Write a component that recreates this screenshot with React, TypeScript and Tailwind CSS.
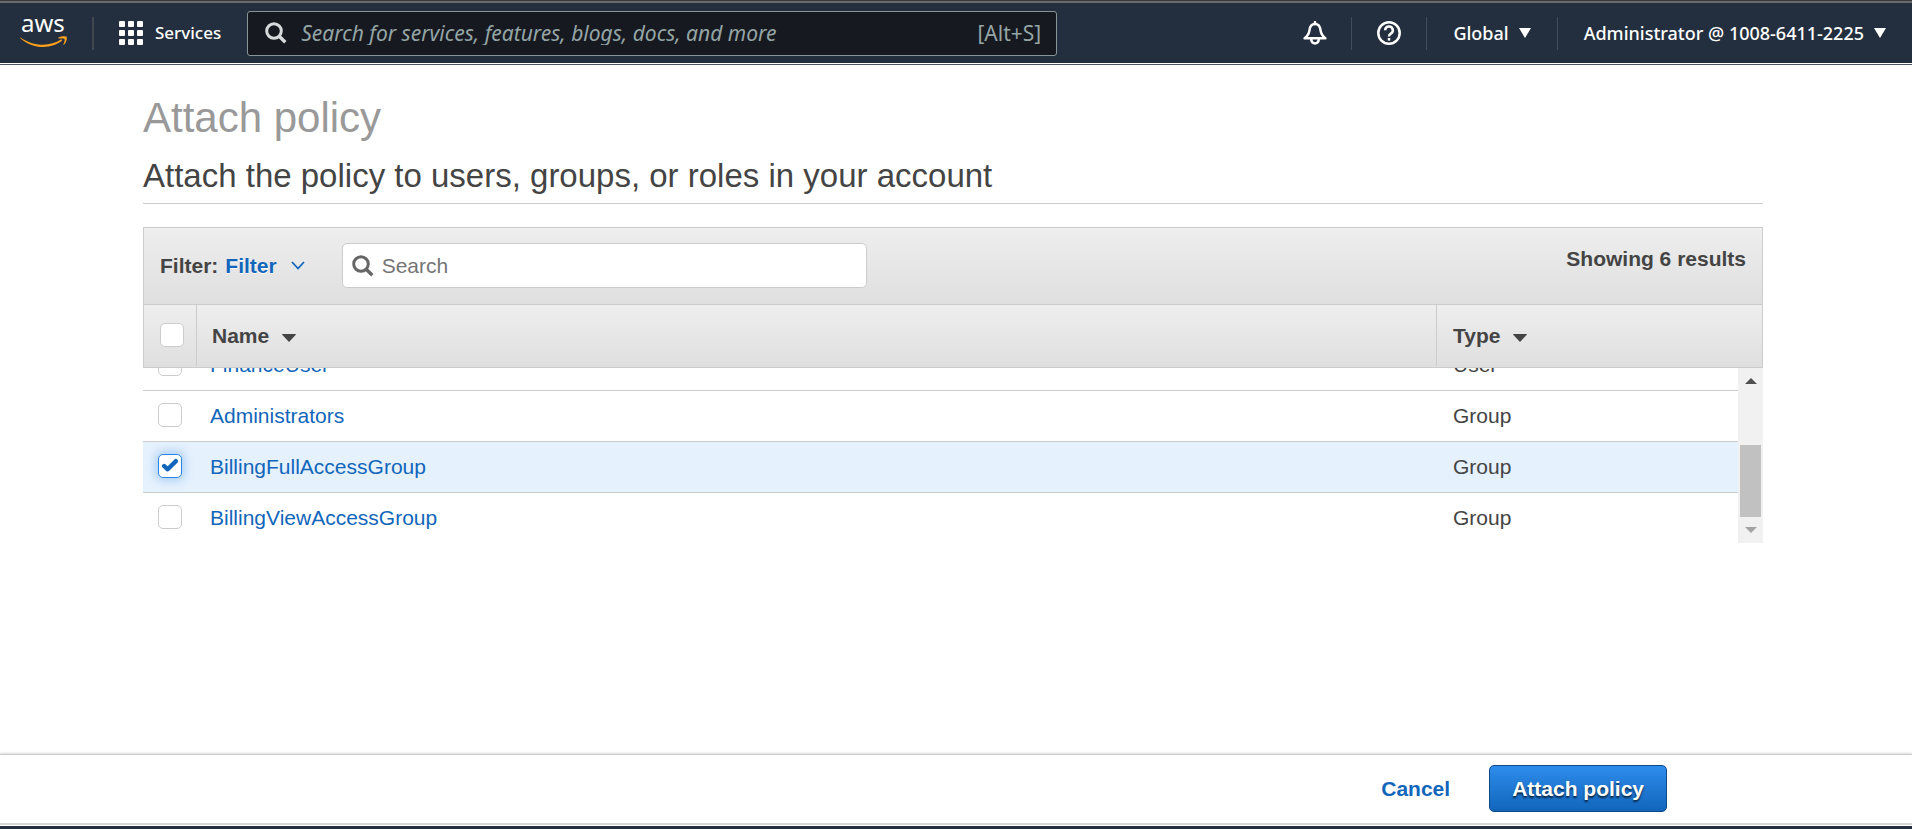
import { useState } from "react";

type Row = { name: string; type: string };

const ROWS: Row[] = [
  { name: "FinanceUser", type: "User" },
  { name: "Administrators", type: "Group" },
  { name: "BillingFullAccessGroup", type: "Group" },
  { name: "BillingViewAccessGroup", type: "Group" },
];

function AwsLogo() {
  return (
    <svg width="48" height="56" viewBox="0 -12 48 56" role="img" aria-label="aws">
      <text x="1" y="15" fill="#fff" fontSize="24" fontFamily="'Noto Sans', sans-serif">
        aws
      </text>
      <path d="M0.5 20.500C7 25.200 15 27.800 23 27.800c6.500 0 13-1.900 18-5.200.9-.6 1.700.5.8 1.200C37 27.700 30 30 23.500 30 14.500 30 6.500 26.600.4 21.200c-.5-.5-.3-1 .1-.7z" fill="#ff9f1c" />
      <path d="M38.500 20.600c2.400-1.600 7.600-1.500 8.200-.7.600.8-.2 5.600-2.600 7.700-.5.400-.9.200-.7-.3.600-1.500 1.700-4.600 1.100-5.400-.6-.8-3.900-.5-5.500-.3-.6.100-.9-.6-.5-1z" fill="#ff9f1c" />
    </svg>
  );
}

function GridIcon() {
  const cells = [0, 9, 18];
  return (
    <svg width="24" height="24" viewBox="0 0 24 24" fill="#fff" aria-hidden="true">
      {cells.map((y) => cells.map((x) => <rect key={`${x}-${y}`} x={x} y={y} width="6" height="6" rx="1" />))}
    </svg>
  );
}

function SearchIcon({ className }: { className: string }) {
  return (
    <svg width="22" height="22" viewBox="0 0 22 22" fill="none" stroke="currentColor" className={className} aria-hidden="true">
      <circle cx="9" cy="9" r="7.300" strokeWidth="3" />
      <path d="M14.200 14.200L20.300 20.300" strokeWidth="3.400" />
    </svg>
  );
}

function BellIcon() {
  return (
    <svg width="24" height="24" viewBox="0 0 24 24" fill="none" stroke="#fff" strokeWidth="2.500" strokeLinejoin="round" aria-hidden="true">
      <path d="M12 1v2" strokeLinecap="round" />
      <path d="M1.600 17.200h20.800c-2.600-1.700-4.400-4.200-4.900-8C17.100 5.600 15 3 12 3S6.900 5.600 6.500 9.200c-.5 3.800-2.300 6.300-4.900 8z" />
      <path d="M8.300 17.500v1.300a3.700 3.700 0 0 0 7.400 0v-1.300" />
    </svg>
  );
}

function HelpIcon() {
  return (
    <svg width="24" height="24" viewBox="0 0 24 24" fill="none" stroke="#fff" strokeWidth="2.500" aria-hidden="true">
      <circle cx="12" cy="12" r="10.700" />
      <path d="M8.200 9.300a3.800 3.800 0 1 1 5.600 3.300c-1.200.7-1.800 1.300-1.800 2.900" />
      <path d="M12 17v2.600" />
    </svg>
  );
}

function Triangle() {
  return (
    <svg width="12" height="10" viewBox="0 0 12 10" fill="#fff" aria-hidden="true">
      <path d="M0 0h12L6 10z" />
    </svg>
  );
}

function SortArrow() {
  return (
    <svg width="14" height="8" viewBox="0 0 14 8" fill="#444" className="mt-1" aria-hidden="true">
      <path d="M.5 0h13L14 .5 7 8 0 .5z" />
    </svg>
  );
}

function Checkbox({ label, checked, onChange }: { label: string; checked: boolean; onChange: () => void }) {
  return (
    <span className="relative block size-6">
      <input
        type="checkbox"
        aria-label={label}
        checked={checked}
        onChange={onChange}
        className="block size-6 appearance-none rounded-[5px] border border-[#ccc] bg-white checked:border-[#2a85e0] checked:shadow-[0_0_10px_2px_rgba(40,130,230,0.35)]"
      />
      {checked && (
        <svg width="16" height="14" viewBox="0 0 16 14" className="pointer-events-none absolute top-1 left-1" aria-hidden="true">
          <path d="M2.200 8L5.700 11.300L13.800 3.200" fill="none" stroke="#1166bb" strokeWidth="4.400" strokeLinejoin="round" strokeLinecap="round" />
        </svg>
      )}
    </span>
  );
}

export default function App() {
  const [selected, setSelected] = useState<string[]>(["BillingFullAccessGroup"]);
  const toggle = (name: string) =>
    setSelected((current) => (current.includes(name) ? current.filter((n) => n !== name) : [...current, name]));
  const allSelected = selected.length === ROWS.length;

  return (
    <div className="flex min-h-screen flex-col bg-white font-['Liberation_Sans',Arial,sans-serif] text-[21px] leading-6 text-[#444]">
      <header className="border-t border-[#3a3a3c] font-['Noto_Sans',sans-serif]">
        <div className="flex h-[62px] items-center border-t-2 border-[#6a6a6a] bg-[#232f3e]">
          <a href="#home" className="ml-5">
            <AwsLogo />
          </a>
          <div className="ml-6 h-[33px] w-0.5 bg-[#414750]" />
          <button type="button" className="ml-[25px] flex items-center gap-3 text-[17px] font-medium text-white">
            <GridIcon />
            Services
          </button>
          <label className="ml-[26px] flex h-[45px] w-[810px] items-center rounded-[3px] border border-[#879596] bg-[#16191f] px-[15px] text-[21px] text-[#95a5a6]">
            <SearchIcon className="ml-0.5 text-[#d5dbdb]" />
            <input
              type="text"
              aria-label="Search for services, features, blogs, docs, and more"
              placeholder="Search for services, features, blogs, docs, and more"
              className="ml-[14px] min-w-0 flex-1 bg-transparent outline-none placeholder:text-[#95a5a6] placeholder:italic"
            />
            <span>[Alt+S]</span>
          </label>
          <nav className="ml-auto flex items-center text-[18px] font-medium text-white">
            <button type="button" aria-label="Notifications" className="flex h-[33px] items-center px-6">
              <BellIcon />
            </button>
            <button type="button" aria-label="Help" className="flex h-[33px] items-center border-l border-[#414d5c] px-[25px]">
              <HelpIcon />
            </button>
            <button type="button" className="flex h-[33px] items-center gap-2.5 border-l border-[#414d5c] px-[26px]">
              Global
              <Triangle />
            </button>
            <button type="button" className="flex h-[33px] items-center gap-2.5 border-l border-[#414d5c] px-[26px]">
              Administrator @ 1008-6411-2225
              <Triangle />
            </button>
          </nav>
        </div>
        <div className="mt-px h-px bg-[#4b5563]" />
      </header>

      <main className="flex-1 pr-[149px] pl-[143px]">
        <h1 className="mt-[29px] text-[42px] leading-[48px] text-[#999]">Attach policy</h1>
        <h2 className="mt-[15px] border-b border-[#ccc] pb-2 text-[33px] leading-[38px] text-[#444]">
          Attach the policy to users, groups, or roles in your account
        </h2>

        <section className="mt-[23px]">
          <div className="flex h-[77px] items-start border border-b-0 border-[#ccc] bg-linear-to-b from-[#eee] to-[#dfdfdf] px-4 pt-[15px] font-bold">
            <div className="flex h-[45px] items-center">
              <span>Filter:</span>
              <button type="button" className="ml-[7px] flex items-center text-[#1166bb] [text-shadow:0_1px_0_#fff]">
                Filter
                <svg width="14" height="9" viewBox="0 0 14 9" fill="none" stroke="#1166bb" strokeWidth="1.800" className="ml-[14px]" aria-hidden="true">
                  <path d="M1 1l6 6.500L13 1" />
                </svg>
              </button>
            </div>
            <label className="ml-[37px] flex h-[45px] w-[525px] items-center gap-2 rounded-[5px] border border-[#ccc] bg-white px-[9px] font-normal">
              <SearchIcon className="text-[#666]" />
              <input type="search" aria-label="Search" placeholder="Search" className="min-w-0 flex-1 bg-transparent outline-none placeholder:text-[#757575]" />
            </label>
            <span className="mt-1 ml-auto">Showing 6 results</span>
          </div>

          <div className="relative">
            <table className="block w-full">
              <thead className="block">
                <tr className="flex h-16 items-stretch border border-[#ccc] bg-linear-to-b from-[#eee] to-[#dfdfdf] text-left">
                  <th className="flex w-[52px] items-center pb-0.5 pl-4">
                    <Checkbox
                      label="Select all"
                      checked={allSelected}
                      onChange={() => setSelected(allSelected ? [] : ROWS.map((r) => r.name))}
                    />
                  </th>
                  <th className="mb-px flex flex-1 items-center gap-[13px] border-l border-[#ccc] pl-[15px]">
                    Name
                    <SortArrow />
                  </th>
                  <th className="mb-px flex w-[326px] items-center gap-[13px] border-l border-[#ccc] pl-4">
                    Type
                    <SortArrow />
                  </th>
                </tr>
              </thead>
              <tbody className="flex h-[175px] flex-col justify-end overflow-hidden pr-[25px]">
                {ROWS.map((row) => {
                  const checked = selected.includes(row.name);
                  return (
                    <tr
                      key={row.name}
                      className={`flex h-[51px] shrink-0 items-center border-b border-[#ccc] last:h-[50px] last:border-b-0 ${checked ? "bg-[#e5f1fd]" : "bg-white"}`}
                    >
                      <td className="w-[67px] pb-0.5 pl-[15px]">
                        <Checkbox label={`Select ${row.name}`} checked={checked} onChange={() => toggle(row.name)} />
                      </td>
                      <td className="flex-1">
                        <a href="#details" className="text-[#1166bb]">
                          {row.name}
                        </a>
                      </td>
                      <td className="w-[285px]">{row.type}</td>
                    </tr>
                  );
                })}
              </tbody>
            </table>
            <div className="absolute right-0 bottom-0 flex h-[175px] w-[25px] flex-col items-center bg-[#f1f1f1]" aria-hidden="true">
              <svg width="12" height="6" viewBox="0 0 12 6" className="mt-2.5" fill="#505050">
                <path d="M6 0l6 6H0z" />
              </svg>
              <div className="mt-[61px] h-[72px] w-[21px] bg-[#c1c1c1]" />
              <svg width="12" height="6" viewBox="0 0 12 6" className="mt-2.5" fill="#a3a3a3">
                <path d="M0 0h12L6 6z" />
              </svg>
            </div>
          </div>
        </section>
      </main>

      <footer className="border-t border-[#ccc] shadow-[0_-1px_2px_rgba(0,0,0,0.15)]">
        <div className="flex h-[68px] items-start justify-end gap-[39px] pt-2.5 pr-[245px] font-bold">
          <button type="button" className="h-[47px] text-[#1166bb]">
            Cancel
          </button>
          <button
            type="button"
            className="h-[47px] rounded-[5px] border border-[#0d4a8a] bg-linear-to-b from-[#2d8cec] to-[#1166bb] px-[22px] text-white [text-shadow:0_2px_2px_rgba(0,0,0,0.7)]"
          >
            Attach policy
          </button>
        </div>
        <div className="h-0.5 bg-[#d5d5d5]" />
        <div className="mt-px h-[3px] bg-[#232f3e]" />
      </footer>
    </div>
  );
}
